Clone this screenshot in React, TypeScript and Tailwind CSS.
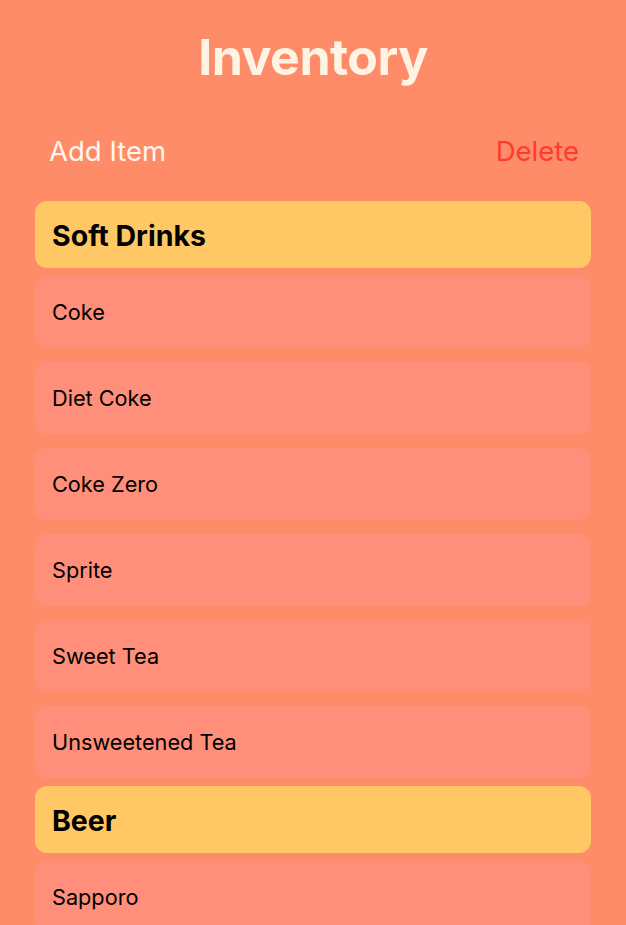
const sections = [
  {
    title: "Soft Drinks",
    items: ["Coke", "Diet Coke", "Coke Zero", "Sprite", "Sweet Tea", "Unsweetened Tea"],
  },
  {
    title: "Beer",
    items: ["Sapporo"],
  },
];

export default function App() {
  return (
    <div
      className="h-[925px] overflow-hidden bg-[#ff8c69] text-black"
      style={{ fontFamily: "Inter, 'Noto Sans', sans-serif" }}
    >
      <h1 className="pt-[22px] text-center text-[50px] font-bold leading-[70px] tracking-[-0.5px] text-[#fff3e3]">
        Inventory
      </h1>

      <div className="mt-[42px] flex items-center justify-between pl-[49px] pr-[47px] text-[27.5px] leading-[34px]">
        <button className="text-[#fff5ee]">Add Item</button>
        <button className="text-[#ff3b30]">Delete</button>
      </div>

      <div className="mt-[33px] flex flex-col gap-[8px] px-[35px]">
        {sections.map((s) => (
          <div key={s.title} className="flex flex-col gap-[8px]">
            <div className="flex h-[67px] items-center rounded-[12px] bg-[#ffc864] px-[17px] pt-[3px] text-[28.5px] font-bold">
              {s.title}
            </div>
            <div className="flex flex-col gap-[14px]">
              {s.items.map((it) => (
                <div
                  key={it}
                  className="flex h-[72px] items-center rounded-[12px] bg-[#ff8e7a] px-[17px] text-[21.7px]"
                >
                  {it}
                </div>
              ))}
            </div>
          </div>
        ))}
      </div>
    </div>
  );
}
